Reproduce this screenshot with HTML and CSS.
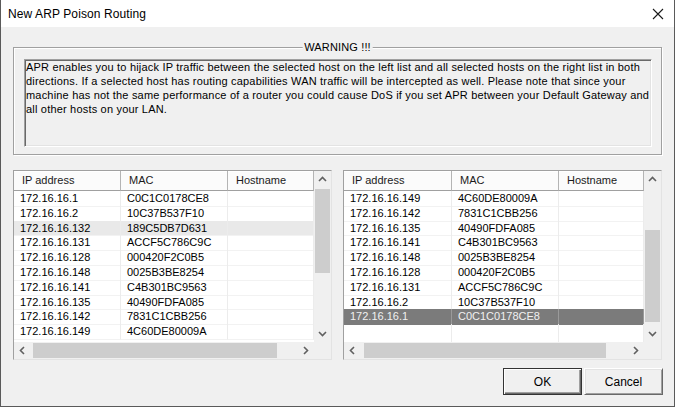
FILE: index.html
```html
<!DOCTYPE html>
<html>
<head>
<meta charset="utf-8">
<link rel="stylesheet" href="styles.css">
</head>
<body>
<div class="window">
  <div class="titlebar">
    <span class="title">New ARP Poison Routing</span>
    <span class="close"><svg width="12" height="12" viewBox="0 0 12 12"><path d="M1 1 L11 11 M11 1 L1 11" stroke="#1a1a1a" stroke-width="1.1" fill="none"/></svg></span>
  </div>
  <div class="content">
    <div class="groupbox">
      <span class="legend">WARNING !!!</span>
      <div class="warntext">APR enables you to hijack IP traffic between the selected host on the left list and all selected hosts on the right list in both<br>directions. If a selected host has routing capabilities WAN traffic will be intercepted as well. Please note that since your<br>machine has not the same performance of a router you could cause DoS if you set APR between your Default Gateway and<br>all other hosts on your LAN.</div>
    </div>
    <div class="lists">
      <div class="list list-left">
        <div class="view">
          <div class="row header"><div class="hcell">IP address</div><div class="hcell">MAC</div><div class="hcell">Hostname</div></div>
          <div class="rows">
            <div class="row"><div class="cell">172.16.16.1</div><div class="cell">C0C1C0178CE8</div><div class="cell"></div></div>
            <div class="row"><div class="cell">172.16.16.2</div><div class="cell">10C37B537F10</div><div class="cell"></div></div>
            <div class="row hover"><div class="cell">172.16.16.132</div><div class="cell">189C5DB7D631</div><div class="cell"></div></div>
            <div class="row"><div class="cell">172.16.16.131</div><div class="cell">ACCF5C786C9C</div><div class="cell"></div></div>
            <div class="row"><div class="cell">172.16.16.128</div><div class="cell">000420F2C0B5</div><div class="cell"></div></div>
            <div class="row"><div class="cell">172.16.16.148</div><div class="cell">0025B3BE8254</div><div class="cell"></div></div>
            <div class="row"><div class="cell">172.16.16.141</div><div class="cell">C4B301BC9563</div><div class="cell"></div></div>
            <div class="row"><div class="cell">172.16.16.135</div><div class="cell">40490FDFA085</div><div class="cell"></div></div>
            <div class="row"><div class="cell">172.16.16.142</div><div class="cell">7831C1CBB256</div><div class="cell"></div></div>
            <div class="row"><div class="cell">172.16.16.149</div><div class="cell">4C60DE80009A</div><div class="cell"></div></div>
          </div>
        </div>
        <div class="vscroll">
          <div class="arrow"><svg width="17" height="17" viewBox="0 0 17 17"><polyline points="5,10 8.5,6.5 12,10" class="chev"/></svg></div>
          <div class="vtrack"><div class="vthumb" style="margin-top:1px;height:84px"></div></div>
          <div class="arrow"><svg width="17" height="17" viewBox="0 0 17 17"><polyline points="5,7 8.5,10.5 12,7" class="chev"/></svg></div>
        </div>
        <div class="hscroll">
          <div class="arrow"><svg width="17" height="17" viewBox="0 0 17 17"><polyline points="10,5 6.5,8.5 10,12" class="chev"/></svg></div>
          <div class="htrack"><div class="hthumb" style="margin-left:2px;width:244px"></div></div>
          <div class="arrow"><svg width="17" height="17" viewBox="0 0 17 17"><polyline points="7,5 10.5,8.5 7,12" class="chev"/></svg></div>
        </div>
        <div class="corner"></div>
      </div>
      <div class="list list-right">
        <div class="view">
          <div class="row header"><div class="hcell">IP address</div><div class="hcell">MAC</div><div class="hcell">Hostname</div></div>
          <div class="rows">
            <div class="row"><div class="cell">172.16.16.149</div><div class="cell">4C60DE80009A</div><div class="cell"></div></div>
            <div class="row"><div class="cell">172.16.16.142</div><div class="cell">7831C1CBB256</div><div class="cell"></div></div>
            <div class="row"><div class="cell">172.16.16.135</div><div class="cell">40490FDFA085</div><div class="cell"></div></div>
            <div class="row"><div class="cell">172.16.16.141</div><div class="cell">C4B301BC9563</div><div class="cell"></div></div>
            <div class="row"><div class="cell">172.16.16.148</div><div class="cell">0025B3BE8254</div><div class="cell"></div></div>
            <div class="row"><div class="cell">172.16.16.128</div><div class="cell">000420F2C0B5</div><div class="cell"></div></div>
            <div class="row"><div class="cell">172.16.16.131</div><div class="cell">ACCF5C786C9C</div><div class="cell"></div></div>
            <div class="row"><div class="cell">172.16.16.2</div><div class="cell">10C37B537F10</div><div class="cell"></div></div>
            <div class="row selected"><div class="cell">172.16.16.1</div><div class="cell">C0C1C0178CE8</div><div class="cell"></div></div>
            <div class="row filler"><div class="cell"></div><div class="cell"></div><div class="cell"></div></div>
          </div>
        </div>
        <div class="vscroll">
          <div class="arrow"><svg width="17" height="17" viewBox="0 0 17 17"><polyline points="5,10 8.5,6.5 12,10" class="chev"/></svg></div>
          <div class="vtrack"><div class="vthumb" style="margin-top:42px;height:92px"></div></div>
          <div class="arrow"><svg width="17" height="17" viewBox="0 0 17 17"><polyline points="5,7 8.5,10.5 12,7" class="chev"/></svg></div>
        </div>
        <div class="hscroll">
          <div class="arrow"><svg width="17" height="17" viewBox="0 0 17 17"><polyline points="10,5 6.5,8.5 10,12" class="chev"/></svg></div>
          <div class="htrack"><div class="hthumb" style="margin-left:3px;width:242px"></div></div>
          <div class="arrow"><svg width="17" height="17" viewBox="0 0 17 17"><polyline points="7,5 10.5,8.5 7,12" class="chev"/></svg></div>
        </div>
        <div class="corner"></div>
      </div>
    </div>
    <div class="buttons">
      <button class="btn btn-default">OK</button>
      <button class="btn">Cancel</button>
    </div>
  </div>
</div>
</body>
</html>
```
FILE: styles.css
```css
* { box-sizing: border-box; }
html, body { margin: 0; padding: 0; }
body {
  width: 675px;
  height: 407px;
  overflow: hidden;
  font-family: "Liberation Sans", Arial, sans-serif;
  font-size: 11px;
  color: #000;
  background: #f0f0f0;
}
.window {
  width: 675px;
  height: 407px;
  border: 1px solid #5a5a5a;
  border-top: none;
  background: #f0f0f0;
  display: flex;
  flex-direction: column;
}
.titlebar {
  height: 27px;
  flex: none;
  background: #fff;
  display: flex;
  align-items: center;
  justify-content: space-between;
  padding-left: 7px;
}
.title { font-size: 12px; color: #000; letter-spacing: 0.1px; }
.close {
  width: 32px;
  height: 27px;
  display: flex;
  align-items: center;
  justify-content: center;
}
.content {
  flex: 1;
  display: flex;
  flex-direction: column;
  padding: 20px 12px 0 12px;
}
.groupbox {
  position: relative;
  height: 108px;
  border: 1px solid #a0a0a0;
  box-shadow: inset 1px 1px 0 #fff, 1px 1px 0 #fff;
  padding: 11px 9px 7px 10px;
}
.legend {
  position: absolute;
  top: -7px;
  left: 50%;
  transform: translateX(-50%);
  background: #f0f0f0;
  padding: 0 2px;
  line-height: 13px;
  white-space: nowrap;
  letter-spacing: 0.15px;
}
.warntext {
  height: 100%;
  border: 1px solid;
  border-color: #a0a0a0 #fff #fff #a0a0a0;
  box-shadow: inset 1px 1px 0 #696969, inset -1px -1px 0 #e3e3e3;
  padding: 0 2px 0 1px;
  line-height: 14px;
  letter-spacing: 0.19px;
  white-space: nowrap;
  overflow: hidden;
}
.lists {
  margin-top: 15px;
  display: flex;
  gap: 11px;
  height: 190px;
}
.list {
  flex: 1;
  display: grid;
  grid-template-columns: 1fr 17px;
  grid-template-rows: 1fr 17px;
  border: 1px solid;
  border-color: #a0a0a0 #e3e3e3 #e3e3e3 #a0a0a0;
  background: #fff;
  overflow: hidden;
}
.view {
  display: flex;
  flex-direction: column;
  overflow: hidden;
}
.row {
  display: grid;
  grid-template-columns: 107px 107px 1fr;
  height: 14.8px;
  flex: none;
}
.list-right .row { grid-template-columns: 108px 107px 1fr; }
.header { height: 20px; }
.hcell {
  background: #fbfbfb;
  border-right: 1px solid #b4b4b4;
  border-bottom: 1px solid #a0a0a0;
  box-shadow: inset 0 1px 0 #fff;
  padding-left: 8px;
  line-height: 19px;
  color: #1a1a1a;
  white-space: nowrap;
}
.rows {
  flex: 1;
  display: flex;
  flex-direction: column;
  overflow: hidden;
}
.cell {
  border-right: 1px solid #ececec;
  border-bottom: 1px solid #f2f2f2;
  padding-left: 6px;
  padding-top: 1px;
  line-height: 13.8px;
  white-space: nowrap;
}
.hover { background: #e9e9e9; }
.selected { background: #7b7b7b; color: #f0f0f0; }
.selected .cell { border-right-color: #9a9a9a; border-bottom-color: #7b7b7b; }
.filler { flex: 1; height: auto; }
.filler .cell { border-bottom: none; }
.vscroll {
  background: #f0f0f0;
  display: flex;
  flex-direction: column;
}
.arrow {
  width: 17px;
  height: 17px;
  flex: none;
}
.arrow svg { display: block; }
.chev {
  fill: none;
  stroke: #606060;
  stroke-width: 1.6;
}
.vtrack { flex: 1; }
.vthumb {
  width: 15px;
  margin-left: 1px;
  background: #cdcdcd;
}
.hscroll {
  background: #f0f0f0;
  display: flex;
}
.htrack { flex: 1; }
.hthumb {
  height: 15px;
  margin-top: 1px;
  background: #cdcdcd;
}
.corner { background: #f0f0f0; }
.buttons {
  margin-top: 8px;
  display: flex;
  justify-content: flex-end;
  gap: 2px;
  margin-right: -1px;
}
.btn {
  width: 79px;
  height: 27px;
  font-family: "Liberation Sans", Arial, sans-serif;
  font-size: 12px;
  color: #000;
  background: #f0f0f0;
  border: 1px solid;
  border-color: #fff #696969 #696969 #fff;
  box-shadow: inset 1px 1px 0 #e3e3e3, inset -1px -1px 0 #a0a0a0;
  padding: 0;
}
.btn-default {
  border: 1px solid #333;
  box-shadow: inset 1px 1px 0 #fff, inset -1px -1px 0 #696969, inset -2px -2px 0 #a0a0a0;
}
```
